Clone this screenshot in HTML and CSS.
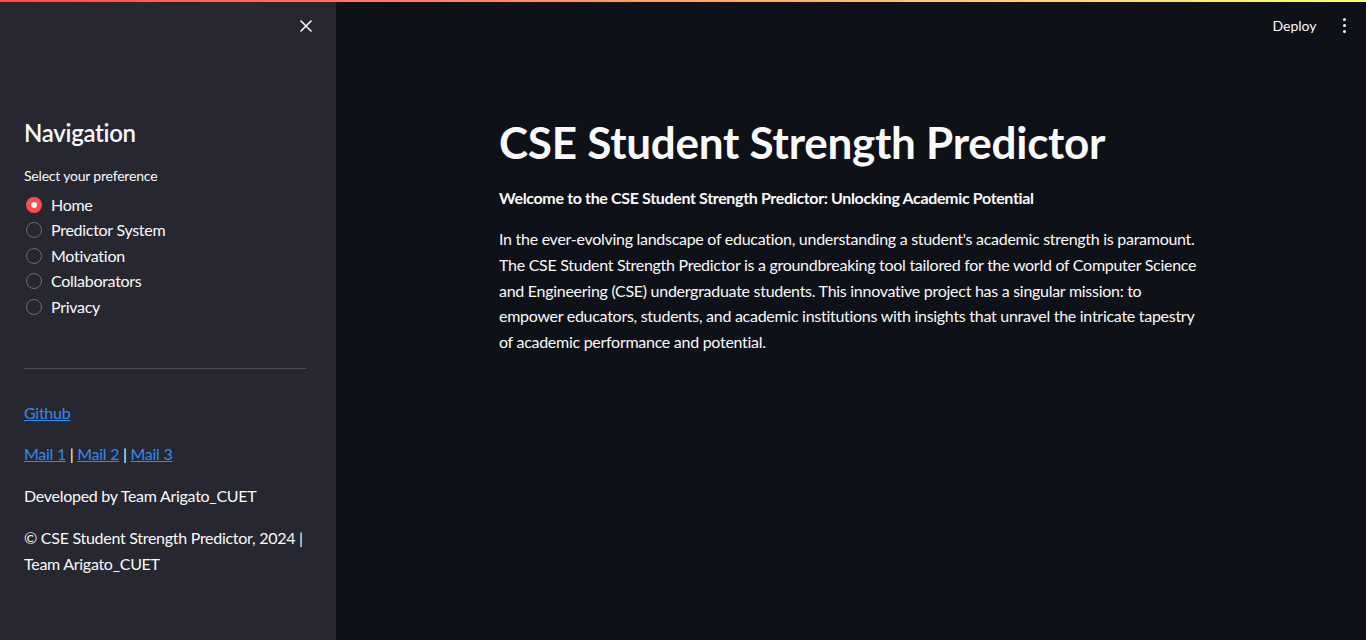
FILE: index.html
```html
<!DOCTYPE html>
<html lang="en">
<head>
<meta charset="utf-8">
<title>CSE Student Strength Predictor</title>
<link rel="stylesheet" href="styles.css">
</head>
<body>
<div class="decoration"></div>
<div class="app">
  <aside class="sidebar">
    <div class="sidebar-top">
      <button class="close-btn" aria-label="Close sidebar">
        <svg width="12" height="12" viewBox="0 0 12 12"><path d="M1 1L11 11M11 1L1 11" stroke="#fafafa" stroke-width="1.6" stroke-linecap="round"/></svg>
      </button>
    </div>
    <div class="sidebar-content">
      <h2 class="side-title">Navigation</h2>
      <div class="radio-label">Select your preference</div>
      <div class="radio-group">
        <label class="radio"><span class="dot checked"></span><span>Home</span></label>
        <label class="radio"><span class="dot"></span><span>Predictor System</span></label>
        <label class="radio"><span class="dot"></span><span>Motivation</span></label>
        <label class="radio"><span class="dot"></span><span>Collaborators</span></label>
        <label class="radio"><span class="dot"></span><span>Privacy</span></label>
      </div>
      <hr class="divider">
      <p class="side-p"><a href="#">Github</a></p>
      <p class="side-p mail"><a href="#">Mail 1</a> | <a href="#">Mail 2</a> | <a href="#">Mail 3</a></p>
      <p class="side-p">Developed by Team Arigato_CUET</p>
      <p class="side-p">© CSE Student Strength Predictor, 2024 | Team Arigato_CUET</p>
    </div>
  </aside>
  <main class="main">
    <header class="header">
      <span class="deploy">Deploy</span>
      <span class="kebab"><i></i><i></i><i></i></span>
    </header>
    <div class="block">
      <h1 class="title">CSE Student Strength Predictor</h1>
      <p class="lead">Welcome to the CSE Student Strength Predictor: Unlocking Academic Potential</p>
      <p class="body-text">In the ever-evolving landscape of education, understanding a student's academic strength is paramount. The CSE Student Strength Predictor is a groundbreaking tool tailored for the world of Computer Science and Engineering (CSE) undergraduate students. This innovative project has a singular mission: to empower educators, students, and academic institutions with insights that unravel the intricate tapestry of academic performance and potential.</p>
    </div>
  </main>
</div>
</body>
</html>
```
FILE: styles.css
```css
* { box-sizing: border-box; }
html, body {
  margin: 0;
  padding: 0;
  height: 100%;
  background: #0e1117;
  color: #fafafa;
  font-family: Lato, "Noto Sans", sans-serif;
  font-size: 16px;
  letter-spacing: -0.28px;
  overflow: hidden;
}
.decoration {
  height: 2px;
  background: linear-gradient(90deg, #ff4b4b, #fffd80);
}
.app {
  display: flex;
  height: calc(100vh - 2px);
}
.sidebar {
  width: 336px;
  flex: 0 0 336px;
  background: #262730;
  padding: 0 30px 0 24px;
}
.sidebar-top {
  height: 48px;
  display: flex;
  justify-content: flex-end;
  align-items: center;
}
.close-btn {
  background: none;
  border: 0;
  padding: 0;
  margin-right: -6px;
  width: 12px;
  height: 12px;
  display: flex;
}
.sidebar-content {
  padding-top: 69px;
}
.side-title {
  margin: 0;
  font-size: 24px;
  font-weight: 600;
  line-height: 1.2;
  letter-spacing: -0.3px;
}
.radio-label {
  margin-top: 17px;
  font-size: 14px;
  line-height: 22px;
  letter-spacing: -0.2px;
}
.radio-group {
  margin-top: 5px;
  display: flex;
  flex-direction: column;
}
.radio {
  display: flex;
  align-items: center;
  gap: 9px;
  height: 25.5px;
  line-height: 25.5px;
}
.dot {
  width: 16px;
  height: 16px;
  margin-left: 2px;
  border-radius: 50%;
  border: 1px solid #6c6d74;
  display: inline-flex;
  align-items: center;
  justify-content: center;
}
.dot.checked {
  border: 0;
  background: #ff4b4b;
}
.dot.checked::after {
  content: "";
  width: 6px;
  height: 6px;
  border-radius: 50%;
  background: #fafafa;
}
.divider {
  margin: 49px 0 31px;
  border: 0;
  border-top: 1px solid #4d4e55;
}
.side-p {
  margin: 0 0 16px;
  line-height: 25.6px;
}
.side-p.mail {
  margin-top: -1px;
  margin-bottom: 17px;
}
a {
  color: #2f8cf0;
  text-decoration: underline;
}
.main {
  flex: 1;
  display: flex;
  flex-direction: column;
}
.header {
  height: 47px;
  display: flex;
  justify-content: flex-end;
  align-items: center;
  padding-right: 20px;
  gap: 26px;
}
.deploy {
  font-size: 14px;
  letter-spacing: 0;
}
.kebab {
  display: flex;
  flex-direction: column;
  gap: 2.5px;
}
.kebab i {
  width: 3.5px;
  height: 3.5px;
  border-radius: 50%;
  background: #fafafa;
}
.block {
  width: 704px;
  margin: 0 auto;
  padding-top: 67px;
}
.title {
  margin: 0;
  font-size: 44px;
  font-weight: 700;
  line-height: 1.2;
  letter-spacing: -0.25px;
}
.lead {
  margin: 16px 0 0;
  font-weight: 700;
  line-height: 25.6px;
  letter-spacing: -0.35px;
}
.body-text {
  margin: 16px 0 0;
  line-height: 25.6px;
}
```
